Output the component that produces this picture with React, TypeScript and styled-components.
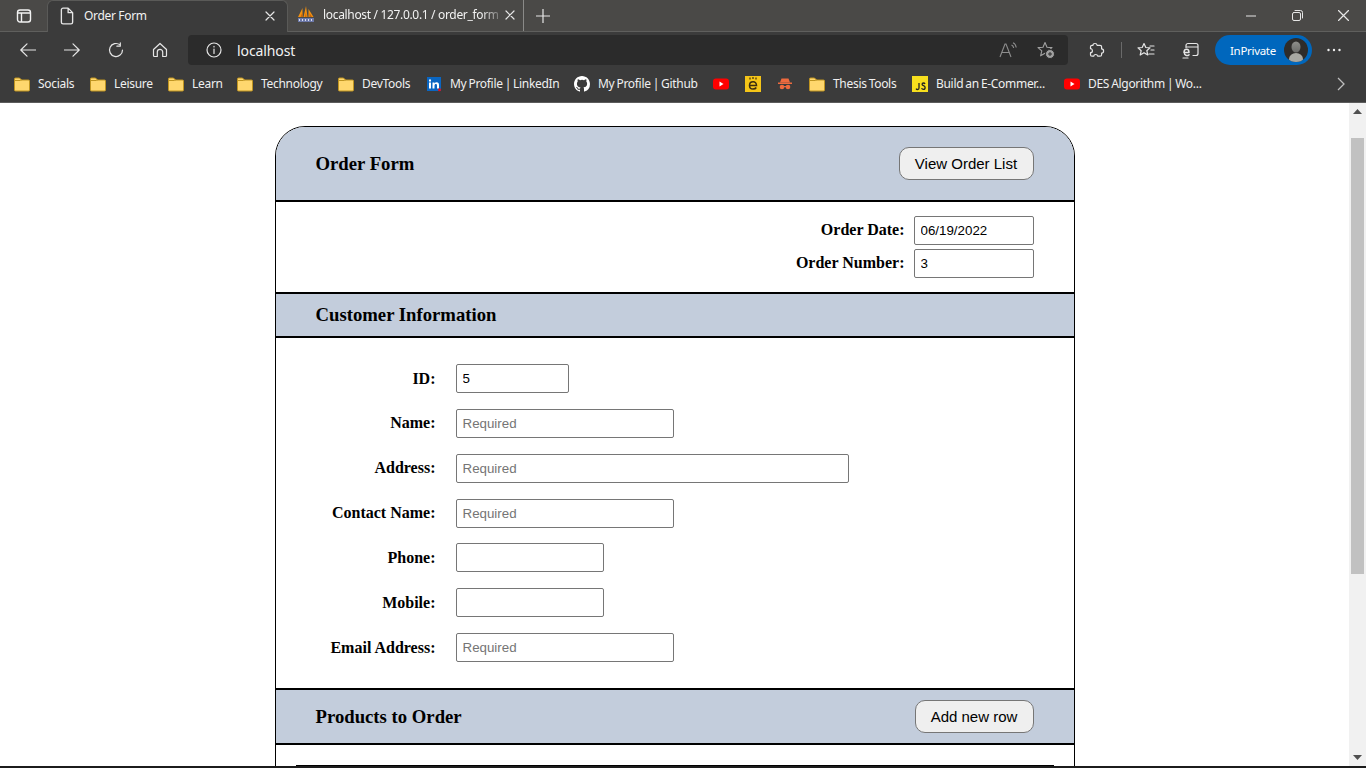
import React from "react";
import styled, { createGlobalStyle } from "styled-components";

const Global = createGlobalStyle`
  html, body { margin: 0; padding: 0; height: 100%; overflow: hidden; background: #fff; }
  * { box-sizing: border-box; }
`;
const UI = `"Noto Sans", "Open Sans", sans-serif`;

const Shell = styled.div`display:flex;flex-direction:column;width:1366px;height:768px;overflow:hidden;`;
const TabStrip = styled.div`display:flex;align-items:flex-end;height:32px;background:#4a4947;border-bottom:1px solid #5f5f5d;`;
const SideBtn = styled.div`width:47px;height:31px;display:flex;align-items:center;justify-content:center;padding-left:1px;`;
const ActiveTab = styled.div`
  width:241px;height:32px;margin-bottom:-1px;background:#3b3b3b;border:1px solid #5a5a58;border-bottom:none;border-radius:6px 6px 0 0;
  display:flex;align-items:center;padding:0 12px 2px 10px;color:#f2f2f2;font:12px ${UI};
`;
const TabTitle = styled.span<{ $w: number; $fade?: boolean }>`
  width:${p => p.$w}px;margin-left:8px;white-space:nowrap;overflow:hidden;letter-spacing:-.33px;
  ${p => p.$fade ? "-webkit-mask-image:linear-gradient(90deg,#000 88%,rgba(0,0,0,.25) 98%);" : ""}
`;
const Tab = styled.div`
  width:236px;height:31px;display:flex;align-items:center;padding:0 8px 2px 9px;color:#f2f2f2;font:12px ${UI};border-right:1px solid #8a8a88;
`;
const CloseSlot = styled.span`margin-left:auto;display:flex;`;
const PlusSlot = styled.div`width:38px;height:31px;display:flex;align-items:center;justify-content:center;`;
const WinControls = styled.div`margin-left:auto;height:31px;display:flex;align-items:center;`;
const WinBtn = styled.div`width:46px;display:flex;justify-content:center;`;

const Toolbar = styled.div`height:36px;background:#3b3b3b;display:flex;align-items:center;padding-left:6px;`;
const NavBtn = styled.div`width:44px;height:30px;display:flex;align-items:center;justify-content:center;`;
const AddressBar = styled.div`
  width:880px;height:30px;margin-left:6px;background:#2b2b2b;border-radius:4px;display:flex;align-items:center;
  padding:0 13px 0 18px;color:#f2f2f2;font:14px ${UI};
`;
const AddressText = styled.span`margin-left:15px;letter-spacing:-.1px;`;
const AddressEnd = styled.div`margin-left:auto;display:flex;gap:18px;align-items:center;`;
const ToolGroup = styled.div`display:flex;align-items:center;margin-left:6px;`;
const Sep = styled.div`width:1px;height:16px;background:#6a6a6a;margin:0 1px;`;
const ToolBtn = styled.div<{ $w: number }>`width:${p => p.$w}px;height:30px;display:flex;align-items:center;justify-content:center;`;
const Pill = styled.div`
  width:97px;height:30px;margin-left:4px;border-radius:15px;background:#0067bd;display:flex;align-items:center;
  justify-content:space-between;padding:0 4px 0 15px;color:#fff;font:11.5px ${UI};letter-spacing:-.3px;
`;
const Avatar = styled.div`width:24px;height:24px;border-radius:50%;overflow:hidden;display:flex;`;

const Bookmarks = styled.div`height:35px;background:#3b3b3b;border-bottom:1px solid #5c5c5c;display:flex;align-items:center;padding:0 0 2px 14px;`;
const Mark = styled.div<{ $w: number }>`
  width:${p => p.$w}px;flex:none;display:flex;align-items:center;gap:8px;color:#f0f0f0;font:12px ${UI};letter-spacing:-.3px;word-spacing:-.8px;white-space:nowrap;
`;
const MarkText = styled.span`margin-bottom:2px;`;
const More = styled.div`margin-left:auto;width:50px;display:flex;justify-content:center;`;

const Viewport = styled.div`height:663px;display:flex;overflow:hidden;background:#fff;`;
const Page = styled.div`width:1349px;height:663px;overflow:hidden;padding-top:23px;display:flex;justify-content:center;`;
const Bar = styled.div`width:17px;background:#f1f1f1;display:flex;flex-direction:column;align-items:center;`;
const Arrow = styled.div`height:17px;display:flex;align-items:center;justify-content:center;flex:none;`;
const Thumb = styled.div`width:13px;height:436px;margin-top:18px;background:#c1c1c1;`;
const Spacer = styled.div`flex:1;`;
const BottomEdge = styled.div`height:2px;background:#1c1c1c;`;

const Card = styled.div`width:800px;height:900px;flex:none;border:1px solid #000;border-radius:30px 30px 0 0;overflow:hidden;font-family:"Liberation Serif",serif;`;
const Band = styled.div<{ $h: number }>`
  height:${p => p.$h}px;background:#c3cddc;display:flex;align-items:center;justify-content:space-between;padding:0 40px;
`;
const Rule = styled.div`height:2px;background:#000;`;
const Title = styled.h3`margin:0;font:bold 18.72px "Liberation Serif",serif;color:#000;`;
const Btn = styled.button<{ $w: number }>`
  width:${p => p.$w}px;height:33px;padding:0;background:#efefef;border:1px solid #767676;border-radius:10px;color:#000;font:15px "Liberation Sans",sans-serif;
`;
const DateBlock = styled.div`height:90px;padding:14px 40px 0 0;display:flex;flex-direction:column;align-items:flex-end;gap:4px;`;
const DateRow = styled.div`display:flex;align-items:center;gap:9px;`;
const Label = styled.label`font:bold 16px "Liberation Serif",serif;color:#000;`;
const DateLabel = styled(Label)`margin-bottom:2px;`;
const Input = styled.input<{ $w: number }>`
  width:${p => p.$w}px;height:29px;padding:1px 6px;border:1px solid #767676;border-radius:2px;background:#fff;color:#000;
  font:13.33px "Liberation Sans",sans-serif;outline:none;
  &::placeholder { color:#757575; opacity:1; }
`;
const CustomerBlock = styled.div`height:350px;padding-top:26.1px;display:flex;flex-direction:column;gap:15.83px;`;
const FormRow = styled.div`display:flex;align-items:center;height:29px;`;
const FormLabel = styled(Label)`width:160px;text-align:right;margin-right:20px;`;
const ProductsBody = styled.div`padding:20px 20px 0;`;
const TableTop = styled.div`height:40px;border-top:2px solid #000;`;

const S = { fill: "none", stroke: "#e6e6e6", strokeWidth: 1.2, strokeLinecap: "round" as const, strokeLinejoin: "round" as const };

const Folder = () => (
  <svg width="16" height="16" viewBox="0 0 16 16"><path d="M.5 14V3a1 1 0 0 1 1-1h4l2 2h7a1 1 0 0 1 1 1v9a1 1 0 0 1-1 1h-13a1 1 0 0 1-1-1z" fill="#ffd76e" stroke="#bf9420" /><path d="M1 4.5h5.5L8 3.8" fill="none" stroke="#bf9420" /></svg>
);
const YouTube = () => (
  <svg width="16" height="16" viewBox="0 0 16 16"><rect x="0" y="2.5" width="16" height="11" rx="3" fill="#f00" /><path d="M6.5 5.6v4.8L10.5 8z" fill="#fff" /></svg>
);
const LinkedIn = () => (
  <svg width="16" height="16" viewBox="0 0 16 16"><rect x="1" y="1" width="14" height="14" fill="#0a66c2" /><rect x="3" y="6.5" width="2" height="6" fill="#fff" /><rect x="3" y="3.5" width="2" height="2" fill="#fff" /><path d="M6.5 6.5h2v1c.5-.8 1.2-1.2 2.2-1.2 1.6 0 2.3 1 2.3 2.8v3.4h-2V9.6c0-.9-.3-1.5-1.1-1.5S8.500 8.700 8.500 9.600v2.900h-2z" fill="#fff" /><circle cx="13.500" cy="13.800" r="1.500" fill="#e01020" /></svg>
);
const Github = () => (
  <svg width="16" height="16" viewBox="0 0 16 16"><path fill="#fff" d="M8 0C3.58 0 0 3.58 0 8c0 3.54 2.29 6.53 5.47 7.59.4.07.55-.17.55-.38 0-.19-.01-.82-.01-1.490-2.010.370-2.530-.490-2.690-.940-.090-.230-.480-.940-.820-1.130-.280-.150-.680-.520-.010-.530.630-.010 1.080.580 1.230.820.720 1.210 1.870.870 2.330.660.070-.520.280-.870.510-1.070-1.780-.200-3.640-.890-3.640-3.950 0-.870.310-1.590.820-2.150-.080-.200-.360-1.020.080-2.120 0 0 .670-.210 2.200.820a7.500 7.500 0 0 1 4 0c1.530-1.040 2.200-.820 2.200-.820.440 1.100.160 1.920.080 2.120.510.560.820 1.270.820 2.150 0 3.070-1.870 3.750-3.650 3.950.290.250.540.730.540 1.480 0 1.070-.010 1.930-.010 2.200 0 .210.150.460.550.380A8.010 8.010 0 0 0 16 8c0-4.420-3.580-8-8-8z" /></svg>
);
const EIcon = () => (
  <svg width="16" height="16" viewBox="0 0 16 16"><rect width="16" height="16" fill="#f5c518" /><path d="M4.500 9.500h7c0-2.600-1.400-3.700-3.400-3.700s-3.600 1.400-3.600 3.600 1.500 3.600 3.600 3.600c1.500 0 2.600-.5 3.200-1.500" fill="none" stroke="#3a2c10" strokeWidth="1.500" /><path d="M5 1.500v2M8 1v2M11 1.500v2" stroke="#3a2c10" strokeWidth="1.200" /></svg>
);
const Spy = () => (
  <svg width="16" height="16" viewBox="0 0 16 16"><path d="M4.500 2.500h7l1.500 4H3z" fill="#ee6a3e" /><rect x="1" y="6.500" width="14" height="1.500" fill="#ee6a3e" /><circle cx="5" cy="11" r="2.300" fill="#ee6a3e" /><circle cx="11" cy="11" r="2.300" fill="#ee6a3e" /><rect x="6.500" y="10" width="3" height="1.200" fill="#ee6a3e" /></svg>
);
const JS = () => (
  <svg width="16" height="16" viewBox="0 0 16 16"><rect width="16" height="16" fill="#f7df1e" /><path d="M7 7v5c0 1-.5 1.500-1.400 1.500-.7 0-1.200-.3-1.500-.9M13 8c-.3-.6-.8-1-1.500-1-.8 0-1.400.5-1.400 1.200 0 1.800 3 1.100 3 3.200 0 1.300-.9 2-1.700 2-.9 0-1.500-.4-1.900-1.100" fill="none" stroke="#222" strokeWidth="1.300" /></svg>
);
const Pma = () => (
  <svg width="18" height="17" viewBox="0 0 18 17"><path d="M1 11 5.500 2v9zM6.500 11 9 0l1.500 11zM11.500 11V3l5 8z" fill="#f29111" /><path d="M3.500 11 5.500 6v5zM8 11l1-5 .5 5zM12.500 11V7l2.500 4z" fill="#c9650a" /><rect x="1" y="12" width="16" height="4" fill="#6c78a8" /><path d="M2.500 13v2M5.500 13v2M8.500 13v2M11.500 13v2M14.500 13v2" stroke="#d8dcf0" /></svg>
);

const marks: { w: number; icon: React.ReactNode; text?: string }[] = [
  { w: 76, icon: <Folder />, text: "Socials" },
  { w: 78, icon: <Folder />, text: "Leisure" },
  { w: 69, icon: <Folder />, text: "Learn" },
  { w: 101, icon: <Folder />, text: "Technology" },
  { w: 88, icon: <Folder />, text: "DevTools" },
  { w: 148, icon: <LinkedIn />, text: "My Profile | LinkedIn" },
  { w: 139, icon: <Github />, text: "My Profile | Github" },
  { w: 32, icon: <YouTube /> },
  { w: 32, icon: <EIcon /> },
  { w: 32, icon: <Spy /> },
  { w: 103, icon: <Folder />, text: "Thesis Tools" },
  { w: 152, icon: <JS />, text: "Build an E-Commer..." },
  { w: 160, icon: <YouTube />, text: "DES Algorithm | Wo..." },
];

export default function App() {
  return (
    <Shell>
      <Global />
      <TabStrip>
        <SideBtn>
          <svg width="16" height="16" viewBox="0 0 16 16" fill="none" stroke="#f2f2f2" strokeWidth="1.400"><rect x="1.500" y="2" width="13" height="12" rx="2.500" /><path d="M1.500 5h13M5.500 5v9" /></svg>
        </SideBtn>
        <ActiveTab>
          <svg width="18" height="18" viewBox="0 0 16 16" {...S}><path d="M3 2.500a1.500 1.500 0 0 1 1.500-1.500h4.500l4 4v8.500a1.500 1.500 0 0 1-1.500 1.500h-7A1.500 1.500 0 0 1 3 13.500zM9 1v4h4" /></svg>
          <TabTitle $w={120}>Order Form</TabTitle>
          <CloseSlot><svg width="10" height="10" viewBox="0 0 10 10" {...S}><path d="M1 1l8 8M9 1L1 9" /></svg></CloseSlot>
        </ActiveTab>
        <Tab>
          <Pma />
          <TabTitle $w={180} $fade>localhost / 127.0.0.1 / order_form</TabTitle>
          <CloseSlot><svg width="10" height="10" viewBox="0 0 10 10" {...S}><path d="M1 1l8 8M9 1L1 9" /></svg></CloseSlot>
        </Tab>
        <PlusSlot><svg width="14" height="14" viewBox="0 0 14 14" {...S}><path d="M7 0v14M0 7h14" /></svg></PlusSlot>
        <WinControls>
          <WinBtn><svg width="10" height="2" viewBox="0 0 10 2" {...S}><path d="M0 1h10" /></svg></WinBtn>
          <WinBtn><svg width="11" height="11" viewBox="0 0 11 11" {...S} strokeWidth={1}><rect x=".5" y="2.500" width="8" height="8" rx="1.500" /><path d="M3 .5h5.500a2 2 0 0 1 2 2V8" /></svg></WinBtn>
          <WinBtn><svg width="11" height="11" viewBox="0 0 11 11" {...S}><path d="M.5.5l10 10M10.500.5l-10 10" /></svg></WinBtn>
        </WinControls>
      </TabStrip>
      <Toolbar>
        <NavBtn><svg width="16" height="14" viewBox="0 0 16 14" {...S}><path d="M15.500 7H.8M7 .8.800 7 7 13.200" /></svg></NavBtn>
        <NavBtn><svg width="16" height="14" viewBox="0 0 16 14" {...S}><path d="M.5 7h14.700M9 .8 15.200 7 9 13.200" /></svg></NavBtn>
        <NavBtn><svg width="16" height="16" viewBox="0 0 16 16" {...S}><path d="M14.500 8A6.500 6.500 0 1 1 12 2.900M12.300.8v3.400H8.900" /></svg></NavBtn>
        <NavBtn><svg width="16" height="16" viewBox="0 0 16 16" {...S}><path d="M1.500 7.500 8 1.500l6.500 6v6a1 1 0 0 1-1 1h-2.800V10a2.700 2.700 0 0 0-5.400 0v4.500H2.500a1 1 0 0 1-1-1z" /></svg></NavBtn>
        <AddressBar>
          <svg width="16" height="16" viewBox="0 0 16 16" {...S}><circle cx="8" cy="8" r="7" /><path d="M8 7v4.500M8 4.300v.6" /></svg>
          <AddressText>localhost</AddressText>
          <AddressEnd>
            <svg width="20" height="16" viewBox="0 0 20 16" fill="none" stroke="#8d8d8d" strokeWidth="1.100"><path d="M1 15 6 2h1l5 13M3 10.500h7.500M12.500 3c1.300.6 2 1.500 2.200 3M14 .8c1.800.8 2.900 2.400 3.200 4.700" /></svg>
            <svg width="18" height="18" viewBox="0 0 18 18"><path d="M8 1.500l2 4.700 5 .4-3.800 3.300 1.200 4.900L8 12.200l-4.400 2.600 1.200-4.900L1 6.600l5-.4z" fill="none" stroke="#a0a0a0" strokeWidth="1.100" strokeLinejoin="round" /><circle cx="13" cy="13" r="4.500" fill="#a0a0a0" stroke="#2b2b2b" /><path d="M13 11v4M11 13h4" stroke="#2b2b2b" /></svg>
          </AddressEnd>
        </AddressBar>
        <ToolGroup>
          <ToolBtn $w={46}><svg width="16" height="16" viewBox="0 0 16 16" {...S}><path d="M6 1.500c1.200 0 2 .8 2.100 1.800h3a1.500 1.500 0 0 1 1.500 1.500v2.100c1.100 0 2 1 2 2.100s-.9 2.100-2 2.100v1.600a1.500 1.500 0 0 1-1.500 1.500H8.700c-.2-1-1-1.700-2-1.700s-1.900.700-2 1.700H3a1.500 1.500 0 0 1-1.500-1.500v-2c1.100 0 1.900-.9 1.900-2s-.8-2-1.900-2V4.800A1.500 1.500 0 0 1 3 3.300h1C4 2.300 4.800 1.500 6 1.500z" /></svg></ToolBtn>
          <Sep />
          <ToolBtn $w={46}><svg width="18" height="16" viewBox="0 0 18 16" {...S}><path d="M7 1.500l1.800 4 4.200.3-3.200 2.900 1 4.300L7 10.700 3.200 13l1-4.300L1 5.800l4.200-.3zM13 4h4M14 8h3M12 12h5" /></svg></ToolBtn>
          <ToolBtn $w={42}><svg width="17" height="17" viewBox="0 0 17 17" {...S}><path d="M4 5.500V3.500a2 2 0 0 1 2-2h8a2 2 0 0 1 2 2v8a2 2 0 0 1-2 2h-3M4 5h12" /><path d="M7 10.500H2c0-2 1-3.200 2.600-3.200S7 8.500 7 10.500c0 0-4.700 0-4.700.3 0 2.500 2.700 3.500 4.700 2" strokeWidth={1.500} /><path d="M1 16h5" /></svg></ToolBtn>
        </ToolGroup>
        <Pill>
          InPrivate
          <Avatar>
            <svg width="24" height="24" viewBox="0 0 24 24"><defs><linearGradient id="av" x1="0" y1="0" x2="0" y2="1"><stop offset="0" stopColor="#8f8f8b" /><stop offset="1" stopColor="#6b6b68" /></linearGradient></defs><rect width="24" height="24" fill="#2e2c2a" /><ellipse cx="12" cy="9" rx="4.500" ry="5.500" fill="url(#av)" /><ellipse cx="12" cy="21" rx="7" ry="6" fill="#a8a8a2" /></svg>
          </Avatar>
        </Pill>
        <ToolBtn $w={44}><svg width="16" height="4" viewBox="0 0 16 4" fill="#eee"><circle cx="2.500" cy="2" r="1.200" /><circle cx="8" cy="2" r="1.200" /><circle cx="13.500" cy="2" r="1.200" /></svg></ToolBtn>
      </Toolbar>
      <Bookmarks>
        {marks.map((m, i) => (
          <Mark key={i} $w={m.w}>{m.icon}{m.text && <MarkText>{m.text}</MarkText>}</Mark>
        ))}
        <More><svg width="8" height="14" viewBox="0 0 8 14" fill="none" stroke="#bdbdbd" strokeWidth="1.300"><path d="M1 1l6 6-6 6" /></svg></More>
      </Bookmarks>
      <Viewport>
        <Page>
          <Card>
            <Band $h={73}>
              <Title>Order Form</Title>
              <Btn $w={135} type="button">View Order List</Btn>
            </Band>
            <Rule />
            <DateBlock>
              <DateRow><DateLabel>Order Date:</DateLabel><Input $w={120} defaultValue="06/19/2022" /></DateRow>
              <DateRow><DateLabel>Order Number:</DateLabel><Input $w={120} defaultValue="3" /></DateRow>
            </DateBlock>
            <Rule />
            <Band $h={42}><Title>Customer Information</Title></Band>
            <Rule />
            <CustomerBlock>
              <FormRow><FormLabel>ID:</FormLabel><Input $w={113} defaultValue="5" /></FormRow>
              <FormRow><FormLabel>Name:</FormLabel><Input $w={218} placeholder="Required" /></FormRow>
              <FormRow><FormLabel>Address:</FormLabel><Input $w={393} placeholder="Required" /></FormRow>
              <FormRow><FormLabel>Contact Name:</FormLabel><Input $w={218} placeholder="Required" /></FormRow>
              <FormRow><FormLabel>Phone:</FormLabel><Input $w={148} /></FormRow>
              <FormRow><FormLabel>Mobile:</FormLabel><Input $w={148} /></FormRow>
              <FormRow><FormLabel>Email Address:</FormLabel><Input $w={218} placeholder="Required" /></FormRow>
            </CustomerBlock>
            <Rule />
            <Band $h={53}>
              <Title>Products to Order</Title>
              <Btn $w={119} type="button">Add new row</Btn>
            </Band>
            <Rule />
            <ProductsBody><TableTop /></ProductsBody>
          </Card>
        </Page>
        <Bar>
          <Arrow><svg width="9" height="5" viewBox="0 0 9 5" fill="#505050"><path d="M4.500 0 9 5H0z" /></svg></Arrow>
          <Thumb />
          <Spacer />
          <Arrow><svg width="9" height="5" viewBox="0 0 9 5" fill="#505050"><path d="M0 0h9L4.500 5z" /></svg></Arrow>
        </Bar>
      </Viewport>
      <BottomEdge />
    </Shell>
  );
}
